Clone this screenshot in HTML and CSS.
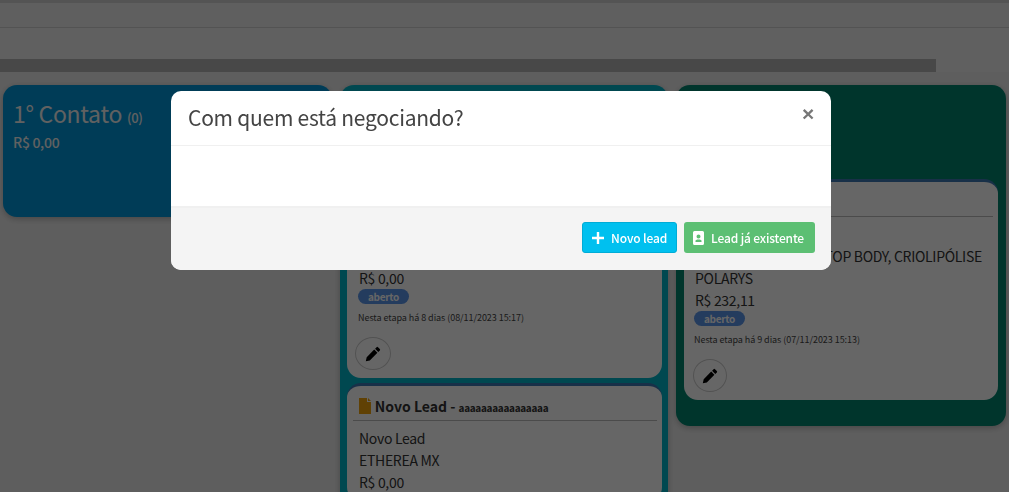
FILE: index.html
```html
<!DOCTYPE html>
<html>
<head>
    <meta charset="utf-8">
    <title>Negociações</title>
    <link rel="stylesheet" href="styles.css">
</head>
<body>
    <div class="topo"></div>
    <div class="subtopo"></div>
    <div class="barra"><div class="barra-fill"></div></div>

    <div class="quadro">
        <div class="coluna azul">
            <h2>1° Contato <small>(0)</small></h2>
            <p class="total">R$ 0,00</p>
        </div>

        <div class="coluna ciano">
            <h2>Apresentação <small>(2)</small></h2>
            <p class="total">R$ 0,00</p>
            <div class="card">
                <div class="card-head">
                    <svg class="doc" viewBox="0 0 12 16"><path d="M0 0h8v4h4v12H0zM9 0l3 3H9z"/></svg>
                    <strong>Novo Lead - </strong><b>aaaaaaaaaaaaaaaa</b>
                </div>
                <div class="linha">Novo Lead</div>
                <div class="linha">ETHEREA MX</div>
                <div class="linha">R$ 0,00</div>
                <span class="badge">aberto</span>
                <div class="etapa">Nesta etapa há 8 dias (08/11/2023 15:17)</div>
                <button class="editar"><svg viewBox="0 0 16 16"><path d="M11.600 1.200a1 1 0 0 1 1.400 0l1.800 1.800a1 1 0 0 1 0 1.400l-1.500 1.500-3.200-3.200zM9.200 3.600l3.200 3.200-7.600 7.600-4 .9.9-4z"/></svg></button>
            </div>
            <div class="card">
                <div class="card-head">
                    <svg class="doc" viewBox="0 0 12 16"><path d="M0 0h8v4h4v12H0zM9 0l3 3H9z"/></svg>
                    <strong>Novo Lead - </strong><b>aaaaaaaaaaaaaaaa</b>
                </div>
                <div class="linha">Novo Lead</div>
                <div class="linha">ETHEREA MX</div>
                <div class="linha">R$ 0,00</div>
            </div>
        </div>

        <div class="coluna verde">
            <h2>Proposta <small>(1)</small></h2>
            <p class="total">R$ 232,11</p>
            <div class="card">
                <div class="card-head">
                    <svg class="doc" viewBox="0 0 12 16"><path d="M0 0h8v4h4v12H0zM9 0l3 3H9z"/></svg>
                    <strong>Novo Lead - </strong><b>aaaaa</b>
                </div>
                <div class="linha">Novo Lead</div>
                <div class="linha">MICROAGULHAS FIT, TOP BODY, CRIOLIPÓLISE POLARYS</div>
                <div class="linha">R$ 232,11</div>
                <span class="badge">aberto</span>
                <div class="etapa">Nesta etapa há 9 dias (07/11/2023 15:13)</div>
                <button class="editar"><svg viewBox="0 0 16 16"><path d="M11.600 1.200a1 1 0 0 1 1.400 0l1.800 1.800a1 1 0 0 1 0 1.400l-1.500 1.500-3.200-3.200zM9.200 3.600l3.200 3.200-7.600 7.600-4 .9.9-4z"/></svg></button>
            </div>
        </div>
    </div>

    <div class="overlay">
        <div class="modal">
            <div class="modal-head">
                <h4>Com quem está negociando?</h4>
                <span class="fechar">×</span>
            </div>
            <div class="modal-body"></div>
            <div class="modal-foot">
                <button class="btn btn-info">
                    <svg viewBox="0 0 12 12"><path d="M4.800 0h2.400v4.800H12v2.400H7.200V12H4.800V7.200H0V4.800h4.800z"/></svg>
                    Novo lead
                </button>
                <button class="btn btn-success">
                    <svg viewBox="0 0 11 14"><path fill-rule="evenodd" d="M1.500 0h8A1.500 1.500 0 0 1 11 1.500v11A1.500 1.500 0 0 1 9.500 14h-8A1.500 1.500 0 0 1 0 12.500v-11A1.500 1.500 0 0 1 1.500 0zM5.500 3.500a2 2 0 1 0 0 4 2 2 0 0 0 0-4zM2.500 9.800v1.200h6V9.800c0-.7-1-1.300-3-1.300s-3 .6-3 1.300z"/></svg>
                    Lead já existente
                </button>
            </div>
        </div>
    </div>
</body>
</html>
```

FILE: styles.css
```css
* {
    box-sizing: border-box;
}

html, body {
    height: 100%;
}

body {
    margin: 0;
    overflow: hidden;
    background-color: #ececec;
    font-family: "Noto Sans CJK SC", "Noto Sans", sans-serif;
    font-size: 14px;
    letter-spacing: -.3px;
    color: #333;
}

.topo {
    height: 27px;
    border-top: 3px solid #d2d2d2;
    background-color: #eeeeee;
}

.subtopo {
    height: 32px;
    border-top: 1px solid #cfcfcf;
    background-color: #efefef;
}

.barra {
    height: 13px;
    background-color: #f0f0f0;
}

.barra-fill {
    width: 936px;
    height: 100%;
    background-color: #b4b4b4;
}

.quadro {
    display: grid;
    grid-template-columns: 329px 328px 330px;
    column-gap: 8px;
    align-items: start;
    margin-top: 13px;
    padding-left: 3px;
}

.coluna {
    min-height: 132px;
    padding: 13px 8px 26px;
    border-radius: 14px;
    color: #f2f2f2;
    box-shadow: 0 2px 6px rgba(0, 0, 0, .25);
}

.coluna.azul { background-color: #0097d9; padding-left: 10px; }
.coluna.ciano { background-color: #00b5c9; padding-left: 7px; padding-right: 6px; }
.coluna.verde { background-color: #00846f; }

.coluna h2 {
    height: 30px;
    margin: 0;
    font-size: 23px;
    font-weight: 400;
    line-height: 30px;
}

.coluna h2 small {
    font-size: 13px;
    font-weight: 500;
    line-height: 1;
}

.total {
    margin: 3px 0 0;
    font-weight: 500;
    line-height: 22px;
}

.card {
    margin-top: 5px;
    padding: 9px 6px 8px 12px;
    border-top: 3px solid #3c78b4;
    border-radius: 14px;
    background-color: #fff;
    color: #333;
}

.total + .card {
    margin-top: 26px;
}

.verde .card {
    padding-left: 11px;
}

.card-head {
    height: 26px;
    margin: 0 -1px 6px -6px;
    padding-left: 6px;
    border-bottom: 1px solid #bbb;
    line-height: 22px;
    white-space: nowrap;
}

.card-head strong {
    font-weight: 700;
    letter-spacing: 0;
}

.card-head b {
    font-size: 10px;
    font-weight: 700;
    line-height: 1;
}

.doc {
    width: 12px;
    height: 16px;
    margin-right: 1px;
    vertical-align: -2px;
    fill: #f0a30a;
}

.linha {
    line-height: 22px;
}

.badge {
    display: block;
    width: fit-content;
    margin-left: -1px;
    padding: 0 10px;
    border-radius: 8px;
    background-color: #5a96ea;
    color: #fff;
    font-size: 10px;
    font-weight: 700;
    line-height: 15px;
}

.etapa {
    margin: 7px 0 12px -1px;
    font-size: 9px;
    letter-spacing: -.05px;
    line-height: 14px;
    color: #444;
}

.editar {
    display: flex;
    align-items: center;
    justify-content: center;
    width: 36px;
    height: 33px;
    margin-left: -4px;
    padding: 0;
    border: 1px solid #ccc;
    border-radius: 50%;
    background: none;
}

.verde .editar {
    width: 34px;
    margin-left: -2px;
}

.editar svg {
    width: 16px;
    height: 16px;
    fill: #000;
}

.overlay {
    position: fixed;
    inset: 0;
    background-color: rgba(0, 0, 0, .6);
}

.modal {
    position: absolute;
    top: 91px;
    left: 171px;
    width: 660px;
    height: 179px;
    overflow: hidden;
    border-radius: 10px;
    background-color: #fff;
}

.modal-head {
    display: flex;
    align-items: center;
    justify-content: space-between;
    height: 55px;
    padding: 0 17px 0;
    border-bottom: 1px solid #f0f0f0;
}

.modal-head h4 {
    margin: 0 0 3px;
    font-size: 21px;
    font-weight: 400;
    letter-spacing: -.25px;
    color: #444;
}

.fechar {
    margin-bottom: 10px;
    font-family: "Liberation Sans", sans-serif;
    font-size: 21px;
    font-weight: 700;
    line-height: 1;
    color: #777;
}

.modal-body {
    height: 60px;
}

.modal-foot {
    display: flex;
    justify-content: flex-end;
    column-gap: 7px;
    height: 64px;
    padding: 14px 16px 0 0;
    border-top: 2px solid #f0f0f0;
    background-color: #f4f4f4;
}

.btn {
    display: flex;
    align-items: center;
    height: 31px;
    padding: 0 9px 0 9px;
    border: 1px solid transparent;
    border-radius: 3px;
    color: #fff;
    font-family: inherit;
    font-size: 12px;
    font-weight: 500;
    letter-spacing: -.15px;
}

.btn svg {
    height: 12px;
    margin-right: 7px;
    fill: #fff;
}

.btn-success svg {
    height: 14px;
}

.btn-info {
    border-color: #00acd6;
    background-color: #00c0ef;
}

.btn-success {
    padding: 0 10px 0 8px;
    background-color: #5cbf73;
}
```
